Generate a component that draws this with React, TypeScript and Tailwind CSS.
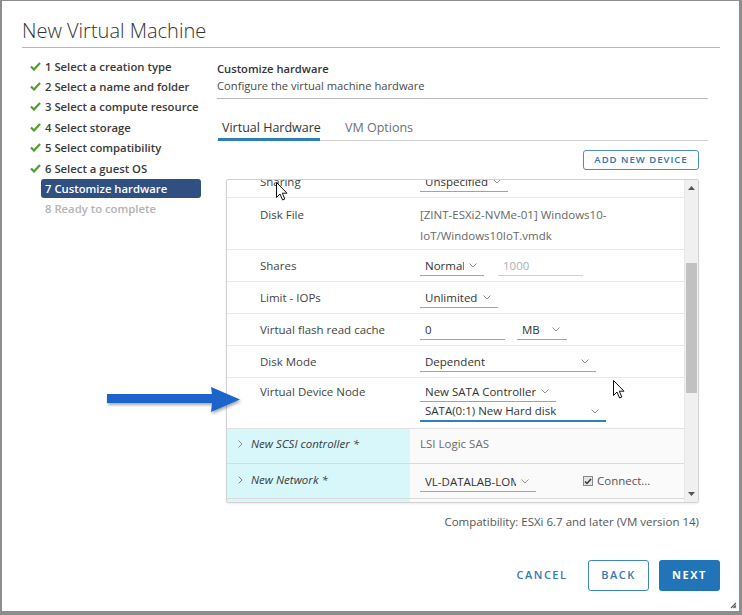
import React from "react";

const Chev = () => (
  <svg width="8" height="5" viewBox="0 0 8 5" className="shrink-0">
    <path d="M0.5 0.5 L4 4 L7.5 0.5" fill="none" stroke="#8f8f8f" strokeWidth="1" />
  </svg>
);

const ChevRight = () => (
  <svg width="5" height="8" viewBox="0 0 5 8" className="shrink-0">
    <path d="M0.5 0.5 L4 4 L0.5 7.5" fill="none" stroke="#8a8a8a" strokeWidth="1" />
  </svg>
);

const Check = () => (
  <svg width="11" height="9" viewBox="0 0 11 9">
    <path d="M1 4.5 L4 7.5 L10 1" fill="none" stroke="#4f9f2f" strokeWidth="2.2" />
  </svg>
);

const Cursor = () => (
  <svg width="13" height="20" viewBox="0 0 13 20">
    <path
      d="M0.5 0.5 L0.5 15.5 L4 12 L6.6 18 L8.8 17 L6.3 11.2 L11 11.2 Z"
      fill="#ffffff"
      stroke="#111111"
      strokeWidth="1"
      strokeLinejoin="round"
    />
  </svg>
);

function Sel({ text, cls, blue }: { text: string; cls: string; blue?: boolean }) {
  return (
    <div
      className={
        "flex items-center justify-between gap-[5px] h-[20px] pl-[5px] pr-[7px] leading-[20px] text-[#333] " +
        (blue ? "border-b-2 border-[#2f7fc6] " : "border-b border-[#a3a3a3] ") +
        cls
      }
    >
      <span className="whitespace-nowrap overflow-hidden">{text}</span>
      <Chev />
    </div>
  );
}

const steps = [
  "1 Select a creation type",
  "2 Select a name and folder",
  "3 Select a compute resource",
  "4 Select storage",
  "5 Select compatibility",
  "6 Select a guest OS",
  "7 Customize hardware",
  "8 Ready to complete",
];

export default function App() {
  return (
    <div
      className="relative w-[742px] h-[615px] bg-white flex flex-col border-t border-l-2 border-r-[3px] border-b-4 border-[#8d8d8d] text-[#3a3a3a] overflow-hidden"
      style={{ fontFamily: '"Open Sans", "Liberation Sans", sans-serif' }}
    >
      {/* Title */}
      <div className="mx-[20px] mr-[19px] h-[47px] pt-[18px] border-b border-[#b8b8b8]">
        <div className="text-[20px] leading-[24px] font-light text-[#333]">New Virtual Machine</div>
      </div>

      {/* Body */}
      <div className="flex pl-[20px]">
        {/* Steps */}
        <div className="w-[180px] pt-[8px] text-[11.3px] font-semibold">
          {steps.map((s, i) => (
            <div key={s} className="flex items-center h-[20.4px]">
              <div className="w-[19px] pl-[8px] flex items-center">{i < 6 ? <Check /> : null}</div>
              <div
                className={
                  "w-[160px] h-[19px] leading-[19px] px-[4px] rounded-[3px] whitespace-nowrap " +
                  (i === 6
                    ? "bg-[#2f5080] text-white"
                    : i === 7
                    ? "text-[#b3b3b3]"
                    : "text-[#3a3a3a]")
                }
              >
                {s}
              </div>
            </div>
          ))}
        </div>

        {/* Right panel */}
        <div className="ml-[15px] w-[491px]">
          <div className="pt-[13px] pb-[4px] border-b border-[#b8b8b8] text-[11.2px]">
            <div className="leading-[16px] font-semibold text-[#333]">Customize hardware</div>
            <div className="leading-[16px] mt-[1px] text-[#4a4a4a]">Configure the virtual machine hardware</div>
          </div>

          {/* Tabs */}
          <div className="h-[42px] flex items-end border-b border-[#cfcfcf]">
            <div className="ml-[1px] w-[102px] -mb-px px-[4px] pb-[2px] border-b-[3px] border-[#2c7cc2] text-[12.5px] leading-[16px] text-[#333] whitespace-nowrap">
              Virtual Hardware
            </div>
            <div className="ml-[21px] -mb-px px-[4px] pb-[2px] border-b-[3px] border-transparent text-[12.5px] leading-[16px] text-[#6f6f6f] whitespace-nowrap">
              VM Options
            </div>
          </div>

          <div className="px-[9px]">
            <div className="mt-[9px] flex justify-end">
              <div className="w-[116px] h-[20px] flex items-center justify-center border border-[#4b8dcc] rounded-[3px] text-[9.5px] tracking-[1px] font-semibold text-[#2f73b3]">
                ADD NEW DEVICE
              </div>
            </div>

            {/* Table */}
            <div className="mt-[9px] h-[324px] flex border border-[#d2d2d2] rounded-[2px] overflow-hidden shadow-[0_1px_2px_rgba(0,0,0,0.08)] text-[11.5px]">
              <div className="flex-1 overflow-hidden">
                <div className="-mt-[14px]">
                  {/* Sharing */}
                  <div className="flex h-[32px] border-b border-[#e8e8e8]">
                    <div className="w-[193px] pl-[33px] mt-[6px] leading-[20px] text-[#444]">Sharing</div>
                    <div className="mt-[6px]">
                      <Sel text="Unspecified" cls="w-[88px]" />
                    </div>
                  </div>
                  {/* Disk File */}
                  <div className="flex h-[52px] border-b border-[#e8e8e8]">
                    <div className="w-[193px] pl-[33px] mt-[6px] leading-[21px] text-[#444]">Disk File</div>
                    <div className="mt-[6px] leading-[21px] text-[#676767]">
                      <div>[ZINT-ESXi2-NVMe-01] Windows10-</div>
                      <div>IoT/Windows10IoT.vmdk</div>
                    </div>
                  </div>
                  {/* Shares */}
                  <div className="flex h-[32px] border-b border-[#e8e8e8]">
                    <div className="w-[193px] pl-[33px] mt-[6px] leading-[20px] text-[#444]">Shares</div>
                    <div className="mt-[6px] flex gap-[14px]">
                      <Sel text="Normal" cls="w-[64px]" />
                      <div className="w-[85px] h-[20px] pl-[5px] leading-[20px] border-b border-[#d0d0d0] text-[#b0b0b0]">
                        1000
                      </div>
                    </div>
                  </div>
                  {/* Limit */}
                  <div className="flex h-[32px] border-b border-[#e8e8e8]">
                    <div className="w-[193px] pl-[33px] mt-[6px] leading-[20px] text-[#444]">Limit - IOPs</div>
                    <div className="mt-[6px]">
                      <Sel text="Unlimited" cls="w-[78px]" />
                    </div>
                  </div>
                  {/* Flash */}
                  <div className="flex h-[32px] border-b border-[#e8e8e8]">
                    <div className="w-[193px] pl-[33px] mt-[6px] leading-[20px] text-[#444]">Virtual flash read cache</div>
                    <div className="mt-[6px] flex gap-[12px]">
                      <div className="w-[85px] h-[20px] pl-[5px] leading-[20px] border-b border-[#a3a3a3] text-[#333]">0</div>
                      <Sel text="MB" cls="w-[50px]" />
                    </div>
                  </div>
                  {/* Disk Mode */}
                  <div className="flex h-[32px] border-b border-[#e8e8e8]">
                    <div className="w-[193px] pl-[33px] mt-[6px] leading-[20px] text-[#444]">Disk Mode</div>
                    <div className="mt-[6px]">
                      <Sel text="Dependent" cls="w-[176px]" />
                    </div>
                  </div>
                  {/* Virtual Device Node */}
                  <div className="flex h-[51px] border-b border-[#e0e0e0]">
                    <div className="w-[193px] pl-[33px] mt-[4px] leading-[20px] text-[#444]">Virtual Device Node</div>
                    <div className="mt-[4px] flex flex-col">
                      <Sel text="New SATA Controller" cls="w-[136px]" />
                      <Sel text="SATA(0:1) New Hard disk" cls="w-[186px]" blue />
                    </div>
                  </div>
                  {/* SCSI */}
                  <div className="flex h-[35px] border-b border-[#dadada]">
                    <div className="w-[183px] bg-[#d8f7fb] pl-[11px] pt-[7px] flex items-start gap-[8px] leading-[16px]">
                      <div className="h-[16px] flex items-center">
                        <ChevRight />
                      </div>
                      <span className="italic text-[#3a3a3a]">New SCSI controller *</span>
                    </div>
                    <div className="flex-1 bg-[#fafafa] pl-[10px] pt-[7px] leading-[16px] text-[#6a6a6a]">LSI Logic SAS</div>
                  </div>
                  {/* Network */}
                  <div className="flex h-[35px] border-b border-[#dadada]">
                    <div className="w-[183px] bg-[#d8f7fb] pl-[11px] pt-[8px] flex items-start gap-[8px] leading-[16px]">
                      <div className="h-[16px] flex items-center">
                        <ChevRight />
                      </div>
                      <span className="italic text-[#3a3a3a]">New Network *</span>
                    </div>
                    <div className="flex-1 bg-[#fafafa] pl-[10px] flex items-start">
                      <div className="mt-[8px]">
                        <Sel text="VL-DATALAB-LOM" cls="w-[116px] [&>span]:w-[92px]" />
                      </div>
                      <div className="ml-[47px] mt-[9px] flex items-center gap-[4px] leading-[16px]">
                        <div className="w-[10px] h-[10px] border border-[#8a8a8a] bg-[#e6e6e6] flex items-center justify-center">
                          <svg width="8" height="7" viewBox="0 0 8 7">
                            <path d="M1 3.5 L3 5.5 L7 1" fill="none" stroke="#333" strokeWidth="1.5" />
                          </svg>
                        </div>
                        <span className="text-[#555]">Connect...</span>
                      </div>
                    </div>
                  </div>
                  {/* partial next row */}
                  <div className="flex h-[35px]">
                    <div className="w-[183px] bg-[#d8f7fb]" />
                    <div className="flex-1 bg-[#fafafa]" />
                  </div>
                </div>
              </div>
              {/* Scrollbar */}
              <div className="w-[14px] bg-[#f0f0f0] flex flex-col border-l border-[#e8e8e8]">
                <div className="h-[16px] flex items-center justify-center">
                  <svg width="7" height="4" viewBox="0 0 7 4">
                    <path d="M0 4 L3.5 0 L7 4 Z" fill="#555" />
                  </svg>
                </div>
                <div className="flex-1">
                  <div className="mt-[67px] ml-[1px] w-[11px] h-[130px] bg-[#c1c1c1]" />
                </div>
                <div className="h-[16px] flex items-center justify-center">
                  <svg width="7" height="4" viewBox="0 0 7 4">
                    <path d="M0 0 L3.5 4 L7 0 Z" fill="#555" />
                  </svg>
                </div>
              </div>
            </div>

            <div className="mt-[12px] text-right text-[11.5px] leading-[14px] text-[#565656]">
              Compatibility: ESXi 6.7 and later (VM version 14)
            </div>
          </div>
        </div>
      </div>

      {/* Footer */}
      <div className="mt-auto flex justify-end gap-[10px] pr-[19px] pb-[20px]">
        <div className="w-[72px] h-[31px] flex items-center justify-center text-[11px] font-semibold tracking-[1.5px] text-[#3578b5]">
          CANCEL
        </div>
        <div className="w-[61px] h-[31px] flex items-center justify-center border border-[#3d84c5] rounded-[3px] text-[11px] font-semibold tracking-[1.5px] text-[#3578b5]">
          BACK
        </div>
        <div className="w-[61px] h-[31px] flex items-center justify-center bg-[#2174b8] rounded-[3px] text-[11px] font-bold tracking-[1.5px] text-white">
          NEXT
        </div>
      </div>

      {/* Blue annotation arrow */}
      <svg
        className="absolute left-[102px] top-[382px]"
        width="142"
        height="36"
        viewBox="0 0 142 36"
      >
        <defs>
          <filter id="sh" x="-10%" y="-30%" width="120%" height="170%">
            <feDropShadow dx="1" dy="2" stdDeviation="1.5" floodColor="#000" floodOpacity="0.35" />
          </filter>
        </defs>
        <path d="M3 11 L108 11 L107 4 L136 16.5 L107 29 L108 20 L3 20 Z" fill="#1e63cc" filter="url(#sh)" />
      </svg>

      {/* Mouse cursors */}
      <div className="absolute left-[274px] top-[181px]">
        <Cursor />
      </div>
      <div className="absolute left-[611px] top-[379px]">
        <Cursor />
      </div>

      {/* Resize grip */}
      <svg className="absolute right-[2px] bottom-[2px]" width="8" height="8" viewBox="0 0 8 8">
        <path d="M7 2 L2 7 M7 4.5 L4.5 7 M7 6.5 L6.5 7" stroke="#555" strokeWidth="1.2" />
      </svg>
    </div>
  );
}
